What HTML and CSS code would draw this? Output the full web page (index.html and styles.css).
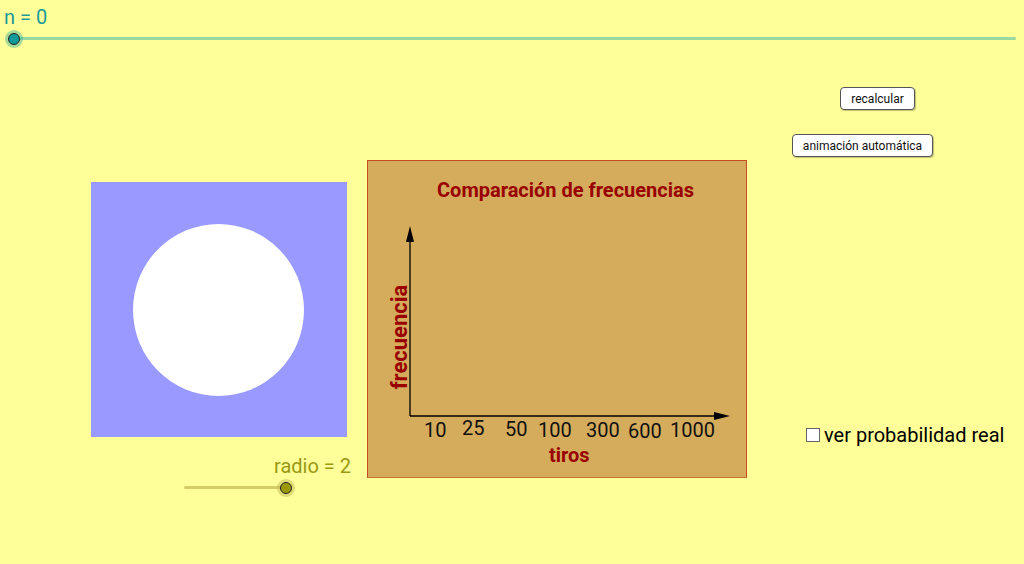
FILE: index.html
```html
<!DOCTYPE html>
<html lang="es">
<head>
<meta charset="utf-8">
<title>Comparación de frecuencias</title>
<link rel="stylesheet" href="styles.css">
</head>
<body>
<div class="canvas">
  <div class="slider-n">
    <div class="label n-label">n = 0</div>
    <div class="track n-track"></div>
    <div class="knob n-knob"></div>
  </div>

  <button class="btn btn-recalc">recalcular</button>
  <button class="btn btn-anim">animación automática</button>

  <div class="square"><div class="disc"></div></div>

  <div class="chart">
    <div class="chart-title">Comparación de frecuencias</div>
    <svg class="axes" width="380" height="318" viewBox="0 0 380 318">
      <line x1="43" y1="256" x2="43" y2="76" stroke="#000" stroke-width="1.3"/>
      <polygon points="43,66 39,82 47,82" fill="#000"/>
      <line x1="43" y1="256" x2="350" y2="256" stroke="#000" stroke-width="1.3"/>
      <polygon points="363,256 347,252 347,260" fill="#000"/>
    </svg>
    <div class="ylabel">frecuencia</div>
    <span class="tick t10">10</span>
    <span class="tick t25">25</span>
    <span class="tick t50">50</span>
    <span class="tick t100">100</span>
    <span class="tick t300">300</span>
    <span class="tick t600">600</span>
    <span class="tick t1000">1000</span>
    <div class="xlabel">tiros</div>
  </div>

  <div class="slider-r">
    <div class="label r-label">radio = 2</div>
    <div class="track r-track"></div>
    <div class="knob r-knob"></div>
  </div>

  <label class="check">
    <span class="box"></span>
    <span class="check-text">ver probabilidad real</span>
  </label>
</div>
</body>
</html>
```

FILE: styles.css
```css
html, body {
  margin: 0;
  padding: 0;
  background: #ffff99;
}
body {
  font-family: Roboto, "Noto Sans", "Liberation Sans", sans-serif;
}
.canvas {
  position: relative;
  width: 1024px;
  height: 564px;
  overflow: hidden;
  background: #ffff99;
}
.label {
  position: absolute;
  font-size: 20px;
  line-height: 20px;
  white-space: nowrap;
}
.n-label {
  left: 4px;
  top: 7px;
  color: #1a9999;
}
.track {
  position: absolute;
  height: 3px;
  border-radius: 2px;
}
.n-track {
  left: 14px;
  top: 37px;
  width: 1002px;
  background: #99d9a0;
}
.knob {
  position: absolute;
  width: 10px;
  height: 10px;
  border-radius: 50%;
  border: 1px solid #222;
}
.n-knob {
  left: 8px;
  top: 33px;
  background: #0f9999;
  box-shadow: 0 0 0 3px rgba(60, 170, 150, 0.45);
}
.btn {
  position: absolute;
  height: 23px;
  padding: 0 8px;
  font-family: Roboto, "Noto Sans", "Liberation Sans", sans-serif;
  font-size: 12px;
  color: #111;
  background: #fff;
  border: 1px solid #555;
  border-radius: 4px;
  box-shadow: 1px 1px 1px rgba(0,0,0,0.25);
  white-space: nowrap;
}
.btn-recalc {
  left: 840px;
  top: 87px;
  width: 75px;
}
.btn-anim {
  left: 792px;
  top: 134px;
  width: 141px;
}
.square {
  position: absolute;
  left: 91px;
  top: 182px;
  width: 256px;
  height: 255px;
  background: #9999ff;
}
.disc {
  position: absolute;
  left: 42px;
  top: 42px;
  width: 171px;
  height: 172px;
  border-radius: 50%;
  background: #fff;
}
.chart {
  position: absolute;
  left: 367px;
  top: 160px;
  width: 380px;
  height: 318px;
  box-sizing: border-box;
  background: #d5ab5c;
  border: 1px solid #c84a20;
  border-bottom-color: #c8782a;
}
.axes {
  position: absolute;
  left: -1px;
  top: -1px;
}
.chart-title {
  position: absolute;
  left: 69px;
  top: 19px;
  font-size: 20px;
  line-height: 20px;
  font-weight: bold;
  color: #990000;
  white-space: nowrap;
}
.ylabel {
  position: absolute;
  left: 32px;
  top: 176px;
  transform: translate(-50%, -50%) rotate(-90deg);
  font-size: 22px;
  font-weight: bold;
  color: #990000;
  white-space: nowrap;
  line-height: 22px;
}
.tick {
  position: absolute;
  font-size: 20px;
  line-height: 20px;
  color: #111;
  white-space: nowrap;
}
.t10 { left: 56px; top: 259px; }
.t25 { left: 94px; top: 257px; }
.t50 { left: 137px; top: 258px; }
.t100 { left: 170px; top: 259px; }
.t300 { left: 218px; top: 259px; }
.t600 { left: 260px; top: 260px; }
.t1000 { left: 302px; top: 259px; }
.xlabel {
  position: absolute;
  left: 181px;
  top: 284px;
  font-size: 20px;
  line-height: 20px;
  font-weight: bold;
  color: #990000;
}
.r-label {
  left: 274px;
  top: 456px;
  color: #999914;
}
.r-track {
  left: 184px;
  top: 486px;
  width: 102px;
  background: #d6cc66;
}
.r-knob {
  left: 280px;
  top: 482px;
  background: #999900;
  box-shadow: 0 0 0 3px rgba(200, 190, 90, 0.55);
}
.check {
  position: absolute;
  left: 806px;
  top: 424px;
  display: flex;
  align-items: center;
  gap: 4px;
  white-space: nowrap;
}
.box {
  width: 12px;
  height: 12px;
  border: 1px solid #666;
  background: #fff;
}
.check-text {
  font-size: 20px;
  line-height: 22px;
  color: #000;
}
```
